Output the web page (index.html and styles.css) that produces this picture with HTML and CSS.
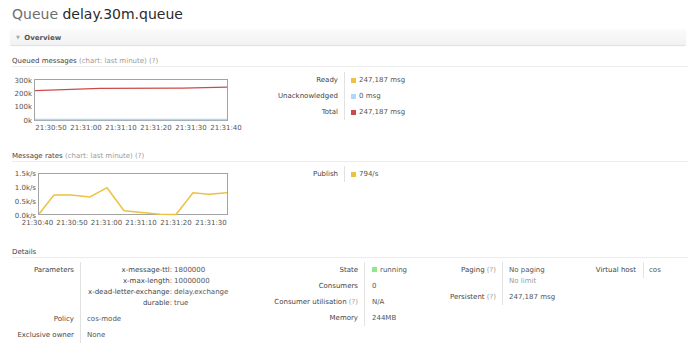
FILE: index.html
```html
<!DOCTYPE html>
<html lang="en">
<head>
  <meta charset="UTF-8">
  <title>Queue delay.30m.queue</title>
  <link rel="stylesheet" href="styles.css">
</head>
<body>

  <h1 class="title"><span class="kind">Queue</span> delay.30m.queue</h1>

  <!-- Overview section -->
  <div class="section-bar"><span class="arrow">&#9660;</span> Overview</div>

  <div class="section-body">
    <h3 class="sub">Queued messages <span class="muted">(chart: last minute) (?)</span></h3>
    <div class="chart-row">
      <svg class="chart" width="240" height="58" viewBox="0 0 240 58">
        <rect x="22.5" y="5.5" width="193" height="41" fill="#fff" stroke="#a3a3a3"/>
        <g class="ticks" text-anchor="end">
          <text x="20" y="8.5">300k</text>
          <text x="20" y="21.5">200k</text>
          <text x="20" y="34.5">100k</text>
          <text x="20" y="48.5">0k</text>
        </g>
        <g class="ticks" text-anchor="middle">
          <text x="39" y="55.5">21:30:50</text>
          <text x="74" y="55.5">21:31:00</text>
          <text x="109" y="55.5">21:31:10</text>
          <text x="144" y="55.5">21:31:20</text>
          <text x="179" y="55.5">21:31:30</text>
          <text x="214" y="55.5">21:31:40</text>
        </g>
        <line x1="23" y1="45.5" x2="215" y2="45.5" stroke="#afd8f8" stroke-width="1.5"/>
        <polyline points="23,16.7 88,14.3 171,14.2 215,13.2" fill="none" stroke="#cb4b4b" stroke-width="1.3"/>
      </svg>
      <div class="legend">
        <div class="lbl">Ready</div>
        <div class="val"><span class="swatch yellow"></span>247,187 msg</div>
        <div class="lbl">Unacknowledged</div>
        <div class="val"><span class="swatch blue"></span>0 msg</div>
        <div class="lbl">Total</div>
        <div class="val"><span class="swatch red"></span>247,187 msg</div>
      </div>
    </div>

    <h3 class="sub rates">Message rates <span class="muted">(chart: last minute) (?)</span></h3>
    <div class="chart-row second">
      <svg class="chart" width="240" height="60" viewBox="0 0 240 60">
        <rect x="26.5" y="5.5" width="189" height="41" fill="#fff" stroke="#a3a3a3"/>
        <g class="ticks" text-anchor="end">
          <text x="24" y="7.5">1.5k/s</text>
          <text x="24" y="21.5">1.0k/s</text>
          <text x="24" y="35.5">0.5k/s</text>
          <text x="24" y="49.5">0.0k/s</text>
        </g>
        <g class="ticks" text-anchor="middle">
          <text x="25.5" y="56.5">21:30:40</text>
          <text x="60" y="56.5">21:30:50</text>
          <text x="94.5" y="56.5">21:31:00</text>
          <text x="129" y="56.5">21:31:10</text>
          <text x="164" y="56.5">21:31:20</text>
          <text x="199" y="56.5">21:31:30</text>
        </g>
        <polyline points="27,46 42,27 59,27 78,29 95,19.7 112,42.7 148,46.3 164,46.5 181,24.7 197,26.3 215,24.7" fill="none" stroke="#edc240" stroke-width="1.5"/>
      </svg>
      <div class="legend">
        <div class="lbl">Publish</div>
        <div class="val"><span class="swatch yellow"></span>794/s</div>
      </div>
    </div>

    <h3 class="sub details-head">Details</h3>
    <div class="details">
      <div class="dcol col1">
        <div class="lbl">Parameters</div>
        <div class="val">
          <div class="params">
            <span class="key">x-message-ttl:</span><span>1800000</span>
            <span class="key">x-max-length:</span><span>10000000</span>
            <span class="key">x-dead-letter-exchange:</span><span>delay.exchange</span>
            <span class="key">durable:</span><span>true</span>
          </div>
        </div>
        <div class="lbl">Policy</div>
        <div class="val">cos-mode</div>
        <div class="lbl">Exclusive owner</div>
        <div class="val">None</div>
      </div>

      <div class="dcol col2">
        <div class="lbl">State</div>
        <div class="val"><span class="swatch green"></span>running</div>
        <div class="lbl">Consumers</div>
        <div class="val">0</div>
        <div class="lbl">Consumer utilisation <span class="muted">(?)</span></div>
        <div class="val">N/A</div>
        <div class="lbl">Memory</div>
        <div class="val">244MB</div>
      </div>

      <div class="dcol col3">
        <div class="lbl">Paging <span class="muted">(?)</span></div>
        <div class="val">No paging<br><span class="muted">No limit</span></div>
        <div class="lbl">Persistent <span class="muted">(?)</span></div>
        <div class="val">247,187 msg</div>
      </div>

      <div class="dcol col4">
        <div class="lbl">Virtual host</div>
        <div class="val">cos</div>
      </div>
    </div>
  </div>

</body>
</html>
```

FILE: styles.css
```css
body {
  margin: 0;
  padding: 0 2px 0 10px;
  font-family: "DejaVu Sans", Verdana, sans-serif;
  font-size: 7px;
  color: #484848;
  background: #fff;
}

.title {
  margin: 0 0 7px 2px;
  padding-top: 6px;
  font-size: 14px;
  line-height: 17px;
  font-weight: normal;
  color: #2a2a2a;
}

.title .kind {
  color: #6e6e6e;
}

.section-bar {
  height: 15px;
  line-height: 15px;
  padding-left: 6px;
  background: linear-gradient(#fafafa, #f2f2f2);
  border-bottom: 1px solid #e2e2e2;
  border-radius: 2px;
  font-weight: bold;
  color: #555;
  box-shadow: 0 0 2px rgba(0, 0, 0, 0.06);
}

.section-bar .arrow {
  font-size: 5px;
  color: #aaa;
  margin-right: 2px;
  vertical-align: 1px;
}

.section-body {
  padding-left: 2px;
  margin-right: -2px;
}

.sub {
  margin: 11px 0 0 0;
  font-size: 7px;
  line-height: 9px;
  font-weight: normal;
  color: #444;
  border-bottom: 1px solid #ececec;
}

.sub.rates {
  margin-top: 20px;
}

.sub.details-head {
  margin-top: 20px;
}

.muted {
  color: #9a9a9a;
}

.chart-row {
  display: flex;
  align-items: flex-start;
  margin-top: 5px;
}

.chart-row.second {
  margin-top: 4px;
}

.chart {
  display: block;
  margin-top: 2px;
}

.ticks {
  font-family: "DejaVu Sans", Verdana, sans-serif;
  font-size: 7px;
  fill: #545454;
}

.legend {
  display: grid;
  grid-template-columns: 92px auto;
}

.legend .lbl,
.dcol .lbl {
  text-align: right;
  padding-right: 6px;
  line-height: 16px;
  color: #444;
}

.legend .val,
.dcol .val {
  border-left: 1px solid #e2e2e2;
  padding-left: 6px;
  line-height: 16px;
  color: #555;
  white-space: nowrap;
}

.swatch {
  display: inline-block;
  width: 5px;
  height: 5px;
  margin-right: 3px;
  vertical-align: -0.5px;
}

.yellow { background: #edc240; }
.blue { background: #afd8f8; }
.red { background: #cb4b4b; }
.green { background: #8ee88e; }

.details {
  display: flex;
  align-items: flex-start;
  margin-top: 4px;
}

.dcol {
  display: grid;
}

.dcol .lbl,
.dcol .val {
  line-height: 11px;
  padding-top: 2.5px;
  padding-bottom: 2.5px;
}

.col1 { grid-template-columns: 68px 185px; }
.col2 { grid-template-columns: 99px 76px; }
.col3 { grid-template-columns: 62px 88px; }
.col4 { grid-template-columns: 53px auto; }

.col2 .val { padding-left: 7px; }
.col4 .lbl { padding-right: 7px; }
.col4 .val { padding-left: 5px; }

.params {
  display: grid;
  grid-template-columns: auto auto;
  justify-content: start;
  column-gap: 2px;
  margin-left: 1px;
}

.params .key {
  text-align: right;
  color: #444;
}
```
